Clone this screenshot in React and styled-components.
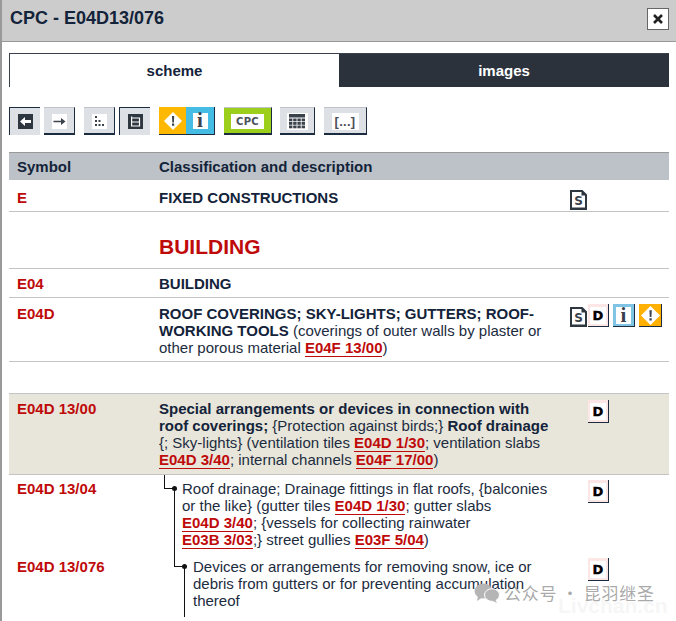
import React from "react";
import styled, { createGlobalStyle } from "styled-components";

const Global = createGlobalStyle`
  html, body { margin: 0; padding: 0; background: #fff; }
  body { font-family: "Liberation Sans", Arial, sans-serif; }
`;

const Page = styled.div`
  position: relative;
  width: 676px;
  height: 621px;
  box-sizing: border-box;
  border-left: 2px solid #999;
  overflow: hidden;
  background: #fff;
`;

const TitleBar = styled.header`
  height: 41px;
  box-sizing: content-box;
  background: #ccc;
  border-bottom: 1px solid #999;
  display: flex;
  align-items: center;
  justify-content: space-between;
  padding: 0 7px 0 8px;
`;

const Title = styled.h1`
  margin: 0 0 5px;
  font-size: 18px;
  font-weight: 700;
  color: #13233a;
`;

const CloseButton = styled.button`
  width: 22px;
  height: 22px;
  padding: 0;
  margin-bottom: 3px;
  box-sizing: border-box;
  background: #fff;
  border: 1px solid #666;
  display: flex;
  align-items: center;
  justify-content: center;
`;

const Body = styled.main`
  padding: 11px 7px 0;
`;

const Tabs = styled.nav`
  display: grid;
  grid-template-columns: 330px 330px;
  height: 34px;
`;

const Tab = styled.div`
  box-sizing: border-box;
  display: flex;
  align-items: center;
  justify-content: center;
  font-size: 15px;
  font-weight: 700;
  color: ${(p) => (p.$active ? "#13233a" : "#fff")};
  background: ${(p) => (p.$active ? "#fff" : "#2b323c")};
  border-top: 1px solid #3a424d;
  border-left: ${(p) => (p.$active ? "1px solid #3a424d" : "none")};
`;

const Toolbar = styled.div`
  display: flex;
  margin: 20px 0 17px;
  height: 28px;
`;

const ToolButton = styled.button`
  width: ${(p) => p.$w}px;
  height: 28px;
  margin-right: ${(p) => p.$mr || 0}px;
  padding: 0;
  box-sizing: border-box;
  display: flex;
  align-items: center;
  justify-content: center;
  background: ${(p) => p.$bg || "#dde0e5"};
  border-style: solid;
  border-color: #1c2c40;
  border-width: ${(p) => (p.$pressed ? "1px 0 0 1px" : "1px 1px 1px 0")};
  border-top-color: ${(p) => (p.$pressed ? "#1c2c40" : "#bcc2c7")};
  box-shadow: ${(p) => (p.$pressed ? "none" : "inset 0 -1px 0 #1c2c40")};
`;

const GlyphTile = styled.span`
  width: ${(p) => p.$w || 15}px;
  height: ${(p) => p.$h || 15}px;
  display: flex;
  align-items: center;
  justify-content: center;
  background: ${(p) => (p.$dark ? "#2e3640" : "#fff")};
  color: #3a424c;
`;

const SplitButton = styled.div`
  display: flex;
  height: 28px;
  margin-right: 9px;
  box-sizing: border-box;
  border-right: 1px solid #1c2c40;
  border-bottom: 1px solid #1c2c40;
`;

const SplitPart = styled.span`
  width: ${(p) => p.$w}px;
  display: flex;
  align-items: center;
  justify-content: center;
  background: ${(p) => p.$bg};
`;

const SerifI = styled.span`
  font-family: "Liberation Serif", serif;
  font-weight: 700;
  font-size: ${(p) => p.$size || 21}px;
  line-height: 1;
  color: #39414b;
`;

const CpcLabel = styled.span`
  font-family: "DejaVu Sans", sans-serif;
  font-size: 10px;
  font-weight: 700;
  letter-spacing: 0.4px;
  color: #4a5159;
`;

const DotsLabel = styled.span`
  font-size: 13px;
  font-weight: 700;
  color: #4a5159;
  letter-spacing: 0.3px;
`;

const TableHead = styled.div`
  display: grid;
  grid-template-columns: 142px 1fr;
  height: 28px;
  box-sizing: border-box;
  align-items: center;
  background: #bcc2c7;
  border-top: 1px solid #999;
  padding-left: 8px;
  font-size: 15px;
  font-weight: 700;
  color: #13233a;
`;

const Row = styled.div`
  position: relative;
  display: grid;
  grid-template-columns: 150px 411px 1fr;
  box-sizing: border-box;
  height: ${(p) => p.$h}px;
  padding-top: ${(p) => p.$pt}px;
  background: ${(p) => p.$bg || "transparent"};
  border-bottom: ${(p) => (p.$plain ? "none" : "1px solid #c4c4c4")};
  font-size: 15px;
  line-height: 17px;
  color: #1c2c40;
`;

const Symbol = styled.div`
  padding-left: 8px;
  font-weight: 700;
  color: #bf0a0a;
`;

const Description = styled.div`
  width: ${(p) => p.$w || 396}px;
  margin-left: ${(p) => p.$indent || 0}px;
  position: relative;
`;

const Strong = styled.b`
  color: #13233a;
`;

const Heading = styled.h2`
  margin: 0;
  font-size: 21px;
  line-height: 23px;
  font-weight: 700;
  color: #bf0a0a;
`;

const CodeLink = styled.a`
  font-weight: 700;
  color: #bf0a0a;
  white-space: nowrap;
  border-bottom: 1px solid #bf0a0a;
`;

const Elbow = styled.i`
  position: absolute;
  left: ${(p) => p.$left}px;
  top: -5px;
  width: 9px;
  height: 13px;
  border-left: 1px solid #111;
  border-bottom: 1px solid #111;
`;

const Bullet = styled.i`
  position: absolute;
  left: ${(p) => p.$left - 2}px;
  top: 6px;
  width: 5px;
  height: 5px;
  border-radius: 50%;
  background: #111;
`;

const Trunk = styled.i`
  position: absolute;
  left: ${(p) => p.$left}px;
  top: 8px;
  bottom: ${(p) => p.$bottom}px;
  border-left: 1px solid #111;
`;

const Actions = styled.div`
  display: flex;
  align-items: flex-start;
  padding-left: ${(p) => p.$pl || 0}px;
  margin-top: ${(p) => p.$mt || 0}px;
`;

const DocWrap = styled.span`
  position: relative;
  width: 17px;
  height: 20px;
  margin-top: ${(p) => p.$mt || 0}px;
  margin-right: 1px;
  flex: none;
  display: block;
`;

const DocLetter = styled.span`
  position: absolute;
  left: 0;
  right: 0;
  top: 5px;
  text-align: center;
  font-family: "DejaVu Sans", sans-serif;
  font-size: 12px;
  line-height: 13px;
  font-weight: 700;
  color: #39414b;
`;

const Badge = styled.span`
  width: ${(p) => p.$w || 21}px;
  height: 23px;
  margin-right: ${(p) => p.$mr || 0}px;
  box-sizing: border-box;
  display: flex;
  flex: none;
  align-items: center;
  justify-content: center;
  background: ${(p) => p.$bg};
  border-right: 1px solid #1c2c40;
  border-bottom: 1px solid #1c2c40;
`;

const BadgeTile = styled.span`
  width: ${(p) => p.$w || 15}px;
  height: 17px;
  display: flex;
  align-items: center;
  justify-content: center;
  background: #fff;
  font-family: "DejaVu Sans", sans-serif;
  font-size: 13px;
  font-weight: 900;
  color: #000;
  -webkit-text-stroke: ${(p) => p.$stroke || 0}px #000;
`;

const Watermark = styled.div`
  position: absolute;
  left: 472px;
  top: 582px;
  display: flex;
  align-items: center;
  gap: 4px;
  font-family: "Noto Sans CJK SC", "Liberation Sans", sans-serif;
  font-size: 17px;
  line-height: 22px;
  letter-spacing: 0.7px;
  color: rgba(120, 120, 120, 0.65);
`;

const WatermarkLatin = styled.div`
  position: absolute;
  left: 556px;
  top: 593px;
  font-size: 21px;
  line-height: 26px;
  font-weight: 700;
  color: rgba(225, 225, 225, 0.3);
`;

const Diamond = ({ size = 18 }) => (
  <svg width={size} height={size} viewBox="0 0 18 18">
    <path d="M9 0 L18 9 L9 18 L0 9 Z" fill="#fff" />
    <path d="M8 4h2.2l-.3 6.4H8.3z M8 11.6h2.2v2.2H8z" fill="#39414b" />
  </svg>
);

const Close = () => (
  <svg width="12" height="12" viewBox="0 0 12 12">
    <path d="M2 2 L10 10 M10 2 L2 10" stroke="#222" strokeWidth="2.6" />
  </svg>
);

const ArrowLeft = () => (
  <svg width="15" height="15" viewBox="0 0 15 15" fill="#fff">
    <path d="M2 7.5 L7 3 V6 H13 V9 H7 V12 Z" />
  </svg>
);

const ArrowRight = () => (
  <svg width="15" height="15" viewBox="0 0 15 15" fill="#3a424c">
    <path d="M1.5 6.7 H9 V4 L13.5 7.5 L9 11 V8.3 H1.5 Z" />
  </svg>
);

const Steps = () => (
  <svg width="15" height="15" viewBox="0 0 15 15" fill="#3a424c">
    <rect x="3" y="2" width="2" height="2" />
    <rect x="3" y="6" width="2" height="2" />
    <rect x="3" y="10" width="2" height="2" />
    <rect x="6.5" y="6" width="2" height="2" />
    <rect x="6.5" y="10" width="2" height="2" />
    <rect x="10" y="10" width="2" height="2" />
  </svg>
);

const TreeGlyph = () => (
  <svg width="15" height="15" viewBox="0 0 15 15" fill="none" stroke="#fff" strokeWidth="1.2">
    <path d="M3.6 2.5 V12 H11.5 V8 H3.6 M3.6 4 H11.5 V8" />
  </svg>
);

const Calendar = () => (
  <svg width="16" height="15" viewBox="0 0 16 15" fill="#3a424c">
    <rect x="0" y="0" width="16" height="3.5" />
    {[4.5, 8, 11.5].map((y) =>
      [0, 4.2, 8.4, 12.6].map((x) => (
        <rect key={`${x}-${y}`} x={x} y={y} width="3.4" height="2.8" />
      ))
    )}
  </svg>
);

const WeChat = () => (
  <svg width="26" height="20" viewBox="0 0 26 20" fill="#b5b5b5">
    <ellipse cx="9.5" cy="8" rx="9" ry="7.5" />
    <path d="M4 13 L3 18 L9 14 Z" />
    <ellipse cx="18" cy="12" rx="7.5" ry="6.3" stroke="#fff" strokeWidth="1" />
    <path d="M21 16 L23 20 L17 17 Z" />
  </svg>
);

const DocOutline = () => (
  <svg width="17" height="20" viewBox="0 0 17 20">
    <path d="M1 1 H12 L16 5 V18.5 H1 Z" fill="#fff" stroke="#2e3640" strokeWidth="2" />
    <path d="M11.5 0 L17 5.5 H11.5 Z" fill="#2e3640" />
    <rect x="0" y="18" width="17" height="2" fill="#2e3640" />
  </svg>
);

const SBadge = ({ mt }) => (
  <DocWrap $mt={mt}>
    <DocOutline />
    <DocLetter>S</DocLetter>
  </DocWrap>
);

const DBadge = ({ mr }) => (
  <Badge $bg="#fde6e6" $mr={mr}>
    <BadgeTile $w={16} $stroke={0.4}>D</BadgeTile>
  </Badge>
);

export default function App() {
  return (
    <>
      <Global />
      <Page>
        <TitleBar>
          <Title>CPC - E04D13/076</Title>
          <CloseButton aria-label="close">
            <Close />
          </CloseButton>
        </TitleBar>
        <Body>
          <Tabs>
            <Tab $active>scheme</Tab>
            <Tab>images</Tab>
          </Tabs>
          <Toolbar>
            <ToolButton $w={31} $mr={4} $pressed>
              <GlyphTile $dark><ArrowLeft /></GlyphTile>
            </ToolButton>
            <ToolButton $w={31} $mr={9}>
              <GlyphTile><ArrowRight /></GlyphTile>
            </ToolButton>
            <ToolButton $w={31} $mr={4}>
              <GlyphTile><Steps /></GlyphTile>
            </ToolButton>
            <ToolButton $w={31} $mr={9} $pressed>
              <GlyphTile $dark><TreeGlyph /></GlyphTile>
            </ToolButton>
            <SplitButton>
              <SplitPart $w={27} $bg="#ffb800"><Diamond /></SplitPart>
              <SplitPart $w={28} $bg="#45bce3">
                <GlyphTile $h={16}><SerifI>i</SerifI></GlyphTile>
              </SplitPart>
            </SplitButton>
            <ToolButton $w={48} $mr={8} $bg="#9ccf1c">
              <GlyphTile $w={33}><CpcLabel>CPC</CpcLabel></GlyphTile>
            </ToolButton>
            <ToolButton $w={35} $mr={9}>
              <GlyphTile $w={21} $h={17}><Calendar /></GlyphTile>
            </ToolButton>
            <ToolButton $w={43}>
              <GlyphTile $w={27} $h={17}><DotsLabel>[...]</DotsLabel></GlyphTile>
            </ToolButton>
          </Toolbar>

          <TableHead>
            <span>Symbol</span>
            <span>Classification and description</span>
          </TableHead>

          <Row $h={32} $pt={9}>
            <Symbol>E</Symbol>
            <Description><Strong>FIXED CONSTRUCTIONS</Strong></Description>
            <Actions $mt={1}><SBadge /></Actions>
          </Row>
          <Row $h={57} $pt={23}>
            <span />
            <Description><Heading>BUILDING</Heading></Description>
          </Row>
          <Row $h={29} $pt={6}>
            <Symbol>E04</Symbol>
            <Description><Strong>BUILDING</Strong></Description>
          </Row>
          <Row $h={64} $pt={7}>
            <Symbol>E04D</Symbol>
            <Description>
              <Strong>ROOF COVERINGS; SKY-LIGHTS; GUTTERS; ROOF-WORKING TOOLS</Strong>{" "}
              (coverings of outer walls by plaster or other porous material{" "}
              <CodeLink>E04F 13/00</CodeLink>)
            </Description>
            <Actions $mt={-1}>
              <SBadge mt={3} />
              <DBadge mr={4} />
              <Badge $bg="#7fc4e4" $w={22} $mr={4}>
                <BadgeTile><SerifI>i</SerifI></BadgeTile>
              </Badge>
              <Badge $bg="#ffb000" $w={23}><Diamond size={19} /></Badge>
            </Actions>
          </Row>
          <Row $h={32} $pt={0}><span /></Row>
          <Row $h={81} $pt={6} $bg="#e8e6da">
            <Symbol>E04D 13/00</Symbol>
            <Description>
              <Strong>Special arrangements or devices in connection with roof coverings;</Strong>{" "}
              {"{Protection against birds;} "}
              <Strong>Roof drainage</Strong>{" {; Sky-lights} (ventilation tiles "}
              <CodeLink>E04D 1/30</CodeLink>; ventilation slabs <CodeLink>E04D 3/40</CodeLink>;
              internal channels <CodeLink>E04F 17/00</CodeLink>)
            </Description>
            <Actions $pl={18}><DBadge /></Actions>
          </Row>
          <Row $h={78} $pt={5} $plain>
            <Symbol>E04D 13/04</Symbol>
            <Description $indent={23} $w={370}>
              <Elbow $left={-18} />
              <Bullet $left={-8} />
              <Trunk $left={-8} $bottom={-5} />
              {"Roof drainage; Drainage fittings in flat roofs, {balconies or the like} (gutter tiles "}
              <CodeLink>E04D 1/30</CodeLink>; gutter slabs <CodeLink>E04D 3/40</CodeLink>
              {"; {vessels for collecting rainwater "}
              <CodeLink>E03B 3/03</CodeLink>;{"} street gullies "}
              <CodeLink>E03F 5/04</CodeLink>)
            </Description>
            <Actions $pl={18}><DBadge /></Actions>
          </Row>
          <Row $h={60} $pt={5} $plain>
            <Symbol>E04D 13/076</Symbol>
            <Description $indent={34} $w={362}>
              <Elbow $left={-19} />
              <Bullet $left={-9} />
              <Trunk $left={-9} $bottom={-4} />
              Devices or arrangements for removing snow, ice or debris from gutters or for
              preventing accumulation thereof
            </Description>
            <Actions $pl={18}><DBadge /></Actions>
          </Row>
        </Body>
        <WatermarkLatin>Livchan.cn</WatermarkLatin>
        <Watermark>
          <WeChat />
          <span>公众号 · 昆羽继圣</span>
        </Watermark>
      </Page>
    </>
  );
}
